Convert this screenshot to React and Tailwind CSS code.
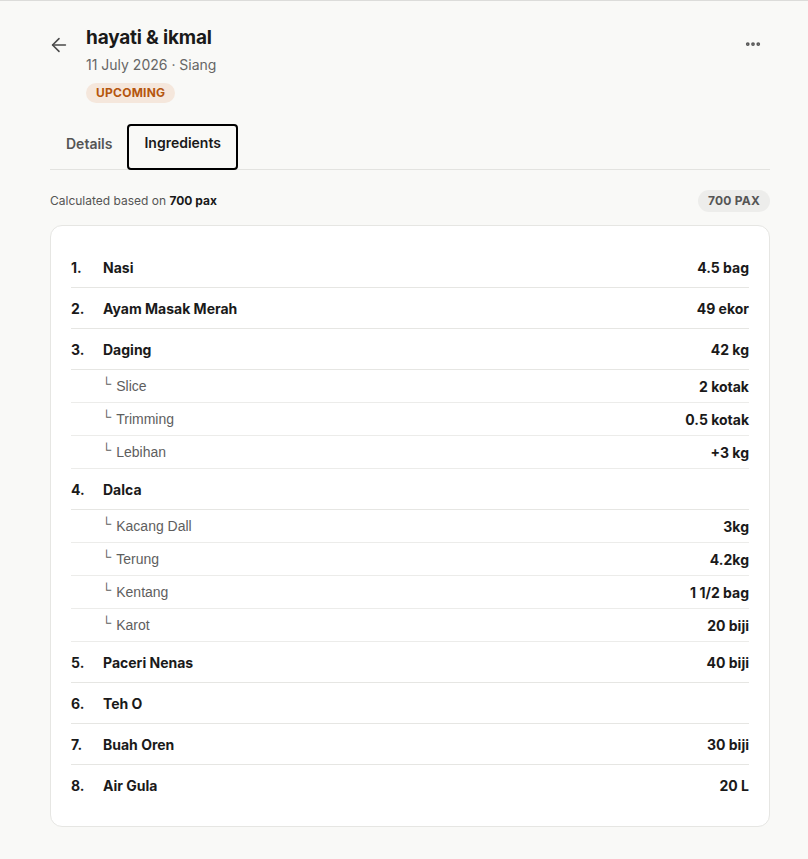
import { ArrowLeft, MoreHorizontal } from 'lucide-react';

const items = [
  { no: 1, name: 'Nasi', qty: '4.5 bag' },
  { no: 2, name: 'Ayam Masak Merah', qty: '49 ekor' },
  {
    no: 3, name: 'Daging', qty: '42 kg',
    subs: [
      { name: 'Slice', qty: '2 kotak' },
      { name: 'Trimming', qty: '0.5 kotak' },
      { name: 'Lebihan', qty: '+3 kg' },
    ],
  },
  {
    no: 4, name: 'Dalca', qty: '',
    subs: [
      { name: 'Kacang Dall', qty: '3kg' },
      { name: 'Terung', qty: '4.2kg' },
      { name: 'Kentang', qty: '1 1/2 bag' },
      { name: 'Karot', qty: '20 biji' },
    ],
  },
  { no: 5, name: 'Paceri Nenas', qty: '40 biji' },
  { no: 6, name: 'Teh O', qty: '' },
  { no: 7, name: 'Buah Oren', qty: '30 biji' },
  { no: 8, name: 'Air Gula', qty: '20 L' },
];

// flatten so every row but the last gets a divider
const rows = items.flatMap((it) => [
  { ...it, main: true },
  ...(it.subs || []).map((s) => ({ ...s, main: false })),
]);

export default function App() {
  return (
    <div className="min-h-[859px] bg-[#f9f9f7] border-t border-[#dcdcda] font-['Inter',sans-serif] text-[#1a1a1a]">
      <div className="w-[720px] ml-[50px] pt-[24px] pb-8">
        {/* Header */}
        <div className="flex items-start">
          <button className="w-[22px] h-9 flex items-center justify-center text-[#4a4a4a] -ml-[2px] mt-[2px]">
            <ArrowLeft size={22} strokeWidth={1.7} />
          </button>
          <div className="ml-4 flex-1">
            <h1 className="text-[19px] font-bold tracking-[-0.01em] leading-[26px]">hayati &amp; ikmal</h1>
            <p className="text-[14px] text-[#666] leading-5 mt-[4px]">11 July 2026 · Siang</p>
            <span className="inline-block mt-[8px] px-[10px] py-[2px] rounded-full bg-[#f5e7dc] text-[#b5560e] text-[12px] font-bold tracking-[0.02em] leading-[16px]">
              UPCOMING
            </span>
          </div>
          <button className="w-9 h-9 flex items-center justify-center text-[#555] -mr-[1px] mt-[1px]">
            <MoreHorizontal size={18} strokeWidth={3} />
          </button>
        </div>

        {/* Tabs */}
        <div className="flex items-end border-b border-[#e3e3e0] mt-[20px] pl-[2px]">
          <button className="px-[14px] h-[46px] pt-[7px] pb-[13px] text-[14px] font-semibold text-[#555] flex items-center">Details</button>
          <button className="px-[15px] h-[46px] pt-[5px] pb-[15px] text-[14px] font-semibold text-[#1a1a1a] border-2 border-black rounded-[4px] ml-[1px] -mb-[1px] flex items-center">
            Ingredients
          </button>
        </div>

        {/* Summary */}
        <div className="flex items-center justify-between mt-[20px]">
          <p className="text-[12px] text-[#555]">
            Calculated based on <span className="font-bold text-[#1a1a1a]">700 pax</span>
          </p>
          <span className="px-[10px] py-[2px] rounded-full bg-[#ededeb] text-[12px] font-bold text-[#555] tracking-[0.02em]">
            700 PAX
          </span>
        </div>

        {/* Ingredient list */}
        <div className="mt-[13px] bg-white border border-[#e6e6e3] rounded-xl px-5 pt-[21px] pb-5">
          {rows.map((r, i) => {
            const last = i === rows.length - 1;
            return r.main ? (
              <div
                key={i}
                className={`flex items-center h-[41px] text-[14px] font-bold ${last ? '' : 'border-b border-[#e6e6e3]'}`}
              >
                <span className="w-[32px]">{r.no}.</span>
                <span className="flex-1">{r.name}</span>
                <span>{r.qty}</span>
              </div>
            ) : (
              <div
                key={i}
                className="flex items-center h-[33px] border-b border-[#ececea] text-[14px]"
              >
                <span className="w-[32px]" />
                <span className="flex-1 text-[#5e5e5e] font-['Liberation_Sans',sans-serif]">
                  <span className="text-[13px] relative -top-[3px] -ml-[1px] mr-[5px]">└</span>
                  {r.name}
                </span>
                <span className="font-bold">{r.qty}</span>
              </div>
            );
          })}
        </div>
      </div>
    </div>
  );
}
